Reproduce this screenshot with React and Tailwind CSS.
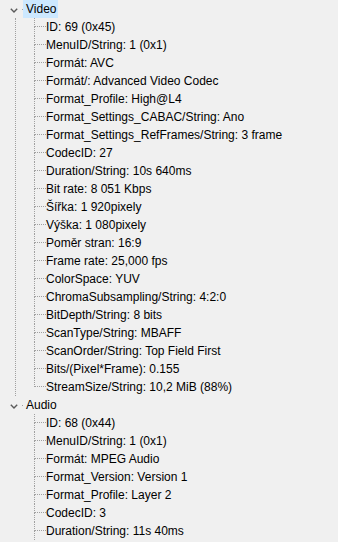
const VIDEO = [
  'ID: 69 (0x45)',
  'MenuID/String: 1 (0x1)',
  'Formát: AVC',
  'Formát/: Advanced Video Codec',
  'Format_Profile: High@L4',
  'Format_Settings_CABAC/String: Ano',
  'Format_Settings_RefFrames/String: 3 frame',
  'CodecID: 27',
  'Duration/String: 10s 640ms',
  'Bit rate: 8 051 Kbps',
  'Šířka: 1 920pixely',
  'Výška: 1 080pixely',
  'Poměr stran: 16:9',
  'Frame rate: 25,000 fps',
  'ColorSpace: YUV',
  'ChromaSubsampling/String: 4:2:0',
  'BitDepth/String: 8 bits',
  'ScanType/String: MBAFF',
  'ScanOrder/String: Top Field First',
  'Bits/(Pixel*Frame): 0.155',
  'StreamSize/String: 10,2 MiB (88%)',
]

const AUDIO = [
  'ID: 68 (0x44)',
  'MenuID/String: 1 (0x1)',
  'Formát: MPEG Audio',
  'Format_Version: Version 1',
  'Format_Profile: Layer 2',
  'CodecID: 3',
  'Duration/String: 11s 40ms',
]

function Chevron() {
  return (
    <svg width="8" height="5" viewBox="0 0 8 5" className="mt-[3px]">
      <path d="M0.8 0.8 L4 4 L7.2 0.8" fill="none" stroke="#5a5a5a" strokeWidth="1.4" />
    </svg>
  )
}

function Leaf({ text, last }) {
  return (
    <div className="flex h-[18px]">
      <div className="flex flex-col w-[12px] shrink-0">
        <div className="h-[9px] border-l border-b border-dotted border-[#a0a0a0]" />
        <div className={last ? 'h-[9px]' : 'h-[9px] border-l border-dotted border-[#a0a0a0]'} />
      </div>
      <span className="leading-[18px] whitespace-nowrap">{text}</span>
    </div>
  )
}

// more audio rows follow below the fold, so its child line keeps running
function Group({ label, items, selected, last, more }) {
  return (
    <div>
      <div className="flex items-center h-[18px]">
        <div className="w-[23px] shrink-0 flex items-center pl-[10px]">
          <Chevron />
          <div className="ml-[4px] w-px h-px bg-[#a0a0a0] mt-px" />
        </div>
        <span
          className={
            selected
              ? 'h-[18px] leading-[18px] pl-[3px] pr-[2px] bg-[#cce8ff]'
              : 'h-[18px] leading-[18px] pl-[3px] pr-[2px]'
          }
        >
          {label}
        </span>
      </div>
      <div
        className={
          last
            ? 'ml-[15px] pl-[19px]'
            : 'ml-[15px] pl-[18px] border-l border-dotted border-[#a0a0a0]'
        }
      >
        {items.map((t, i) => (
          <Leaf key={i} text={t} last={!more && i === items.length - 1} />
        ))}
      </div>
    </div>
  )
}

export default function App() {
  return (
    <div
      className="w-[338px] h-[542px] overflow-hidden bg-[#f0f0f0] text-[12px] text-black"
      style={{ fontFamily: '"Liberation Sans", Arial, sans-serif' }}
    >
      <Group label="Video" items={VIDEO} selected />
      <Group label="Audio" items={AUDIO} last more />
    </div>
  )
}
